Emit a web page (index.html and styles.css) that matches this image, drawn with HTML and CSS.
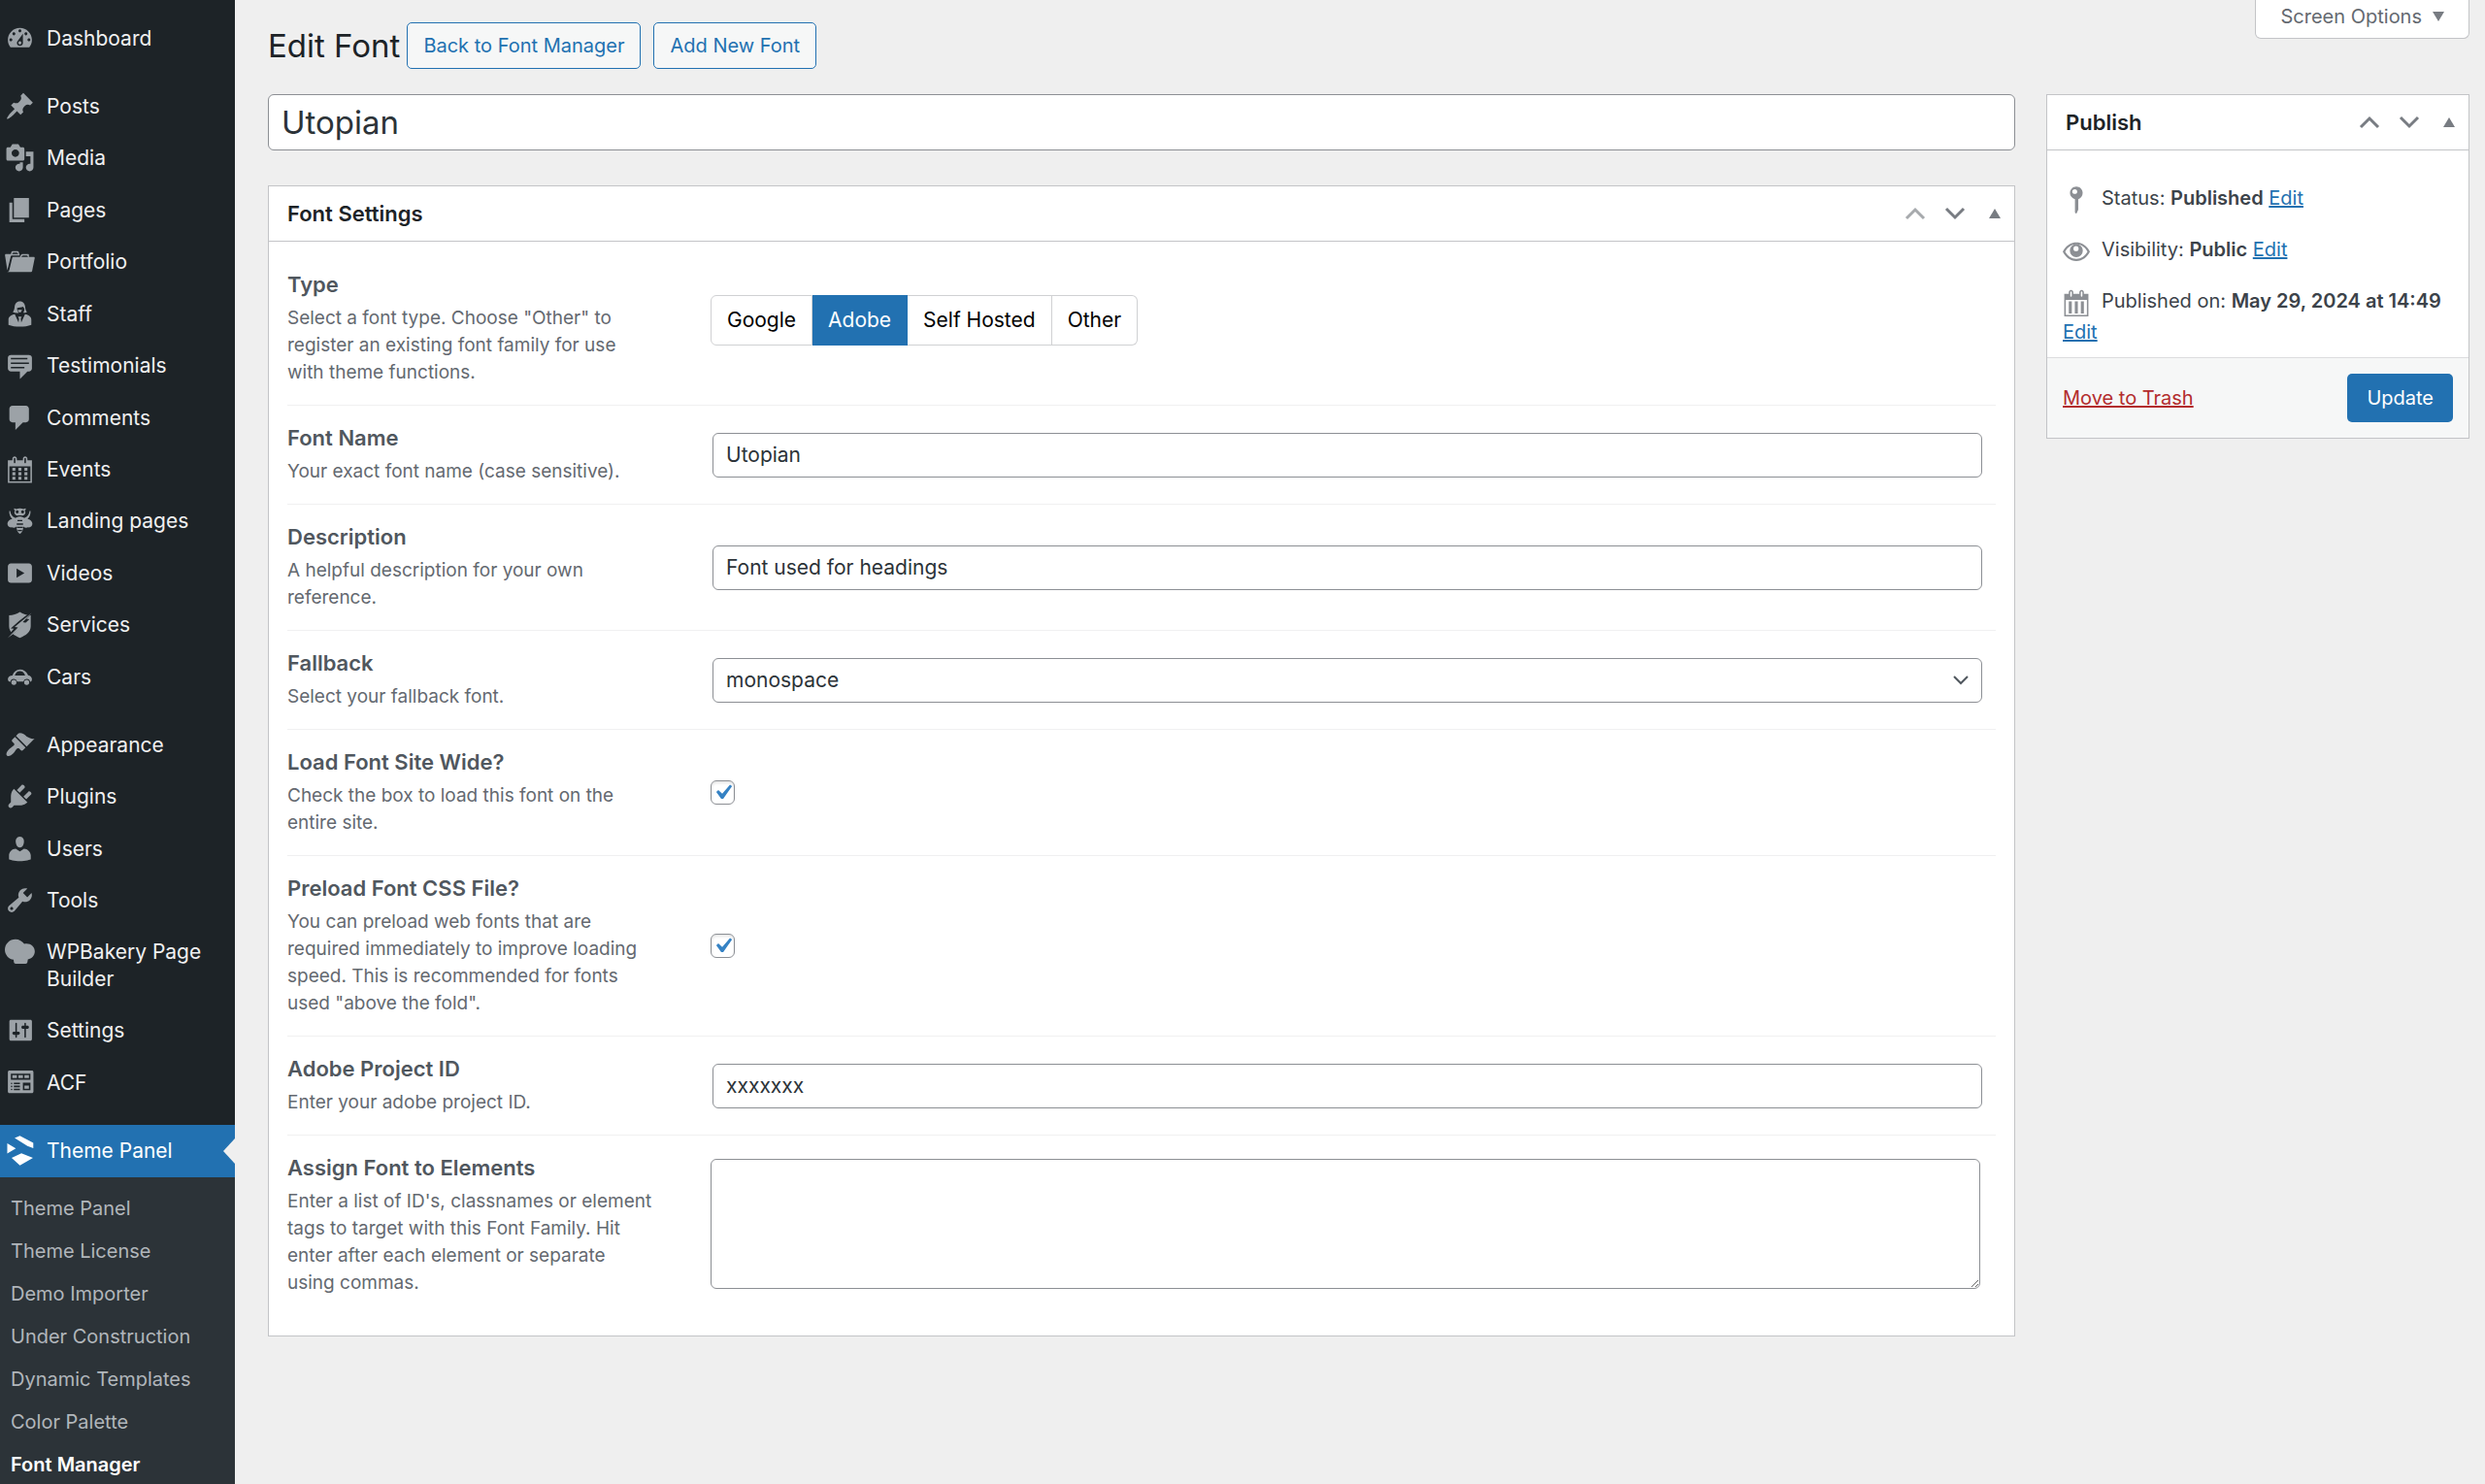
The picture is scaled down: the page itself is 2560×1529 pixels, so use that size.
FILE: index.html
```html
<!DOCTYPE html>
<html lang="en">
<head>
    <meta charset="UTF-8">
    <meta name="viewport" content="width=device-width, initial-scale=1.0">
    <title>Edit Font</title>
    <link rel="stylesheet" href="styles.css">
</head>
<body>

    <nav class="sidebar">
        <ul class="menu">
            <li><a href="#"><svg class="icon" viewBox="0 0 20 20"><path d="M3.76 16h12.48c1.1-1.37 1.76-3.11 1.76-5 0-4.42-3.58-8-8-8s-8 3.58-8 8c0 1.89.66 3.63 1.76 5zM10 4c.55 0 1 .45 1 1s-.45 1-1 1-1-.45-1-1 .45-1 1-1zM6 6c.55 0 1 .45 1 1s-.45 1-1 1-1-.45-1-1 .45-1 1-1zm8 0c.55 0 1 .45 1 1s-.45 1-1 1-1-.45-1-1 .45-1 1-1zm-5.37 5.55L12 7v6c0 1.1-.9 2-2 2s-2-.9-2-2c0-.57.24-1.08.63-1.45zM4 10c.55 0 1 .45 1 1s-.45 1-1 1-1-.45-1-1 .45-1 1-1zm12 0c.55 0 1 .45 1 1s-.45 1-1 1-1-.45-1-1 .45-1 1-1zm-5 3c0-.55-.45-1-1-1s-1 .45-1 1 .45 1 1 1 1-.45 1-1z"/></svg>Dashboard</a></li>
        </ul>

        <ul class="menu menu-content">
            <li><a href="#"><svg class="icon" viewBox="0 0 20 20"><path d="M10.44 3.02l1.82-1.82 6.36 6.35-1.83 1.82c-1.05-.68-2.48-.57-3.41.36l-.75.75c-.92.93-1.04 2.35-.35 3.41l-1.83 1.82-2.41-2.41-2.8 2.79c-.42.42-3.38 2.71-3.8 2.29s1.86-3.39 2.28-3.81l2.79-2.79L4.1 9.36l1.83-1.82c1.05.69 2.48.57 3.4-.36l.75-.75c.93-.92 1.05-2.35.36-3.41z"/></svg>Posts</a></li>
            <li><a href="#"><svg class="icon" viewBox="0 0 20 20"><path d="M13 11V4c0-.55-.45-1-1-1h-1.67L9 1H5L3.67 3H2c-.55 0-1 .45-1 1v7c0 .55.45 1 1 1h10c.55 0 1-.45 1-1zM7 4.5c1.38 0 2.5 1.12 2.5 2.5S8.38 9.5 7 9.5 4.5 8.38 4.5 7 5.62 4.5 7 4.5zM14 6h5v10.5c0 1.38-1.12 2.5-2.5 2.5S14 17.88 14 16.5s1.12-2.5 2.5-2.5c.17 0 .34.02.5.05V9h-3V6zm-4 8.05V13h2v3.5c0 1.38-1.12 2.5-2.5 2.5S7 17.88 7 16.5 8.12 14 9.5 14c.17 0 .34.02.5.05z"/></svg>Media</a></li>
            <li><a href="#"><svg class="icon" viewBox="0 0 20 20"><path d="M6 15V2h10v13H6zm-1 1h8v2H3V5h2v11z"/></svg>Pages</a></li>
            <li><a href="#"><svg class="icon" viewBox="0 0 20 20"><path d="M4 5H.78c-.37 0-.74.32-.69.84l1.56 9.99S3.5 8.47 3.86 6.7c.11-.53.61-.7.98-.7H10s-.7-2.08-.77-2.31C9.11 3.25 8.89 3 8.45 3H5.14c-.36 0-.7.23-.8.64C4.25 4.04 4 5 4 5zm4.88 0h-4s.42-1 .87-1h2.13c.48 0 1 1 1 1zM2.67 16.25c-.31.47-.76.75-1.26.75h15.73c.54 0 .92-.31 1.03-.83.44-2.19 1.68-8.44 1.68-8.44.07-.5-.3-.73-.62-.73H16V5.53c0-.16-.26-.53-.66-.53h-3.76c-.52 0-.87.58-.87.58L10 7H5.59c-.32 0-.63.19-.69.5 0 0-1.59 6.7-1.72 7.33-.07.37-.22.99-.51 1.42zM15.38 7H11s.58-1 1.13-1h2.29c.71 0 .96 1 .96 1z"/></svg>Portfolio</a></li>
            <li><a href="#"><svg class="icon" viewBox="0 0 20 20"><path fill-rule="evenodd" d="M10 1.6c2.3 0 3.3 1.6 3.5 3.600.1 1.400.4 2.600 1.200 3.500-.9.500-1.800.6-2.600.5.500-.5.800-1.300.9-2.300-.1-.6-.4-1.200-1-1.700-1.200.5-2.700.4-3.900 1 0 1.200.4 2.300 1.200 3-.9.300-2.700.2-4-.5.8-.9 1.100-2.100 1.200-3.500C6.700 3.200 7.700 1.6 10 1.6zM8.700 7.1c.9.3 1.800.3 2.600 0-.1 1.100-.6 1.900-1.300 1.900s-1.200-.8-1.300-1.900zM6.600 10.200l2.500 5.400.3-2.600-.6-1.200h2.400l-.6 1.200.3 2.600 2.500-5.400c2.500.3 4.200 1.700 4.200 3.700v3.300c-2.200.8-4.700 1.200-7.600 1.200s-5.400-.4-7.600-1.200v-3.300c0-2 1.700-3.400 4.200-3.700z"/></svg>Staff</a></li>
            <li><a href="#"><svg class="icon" viewBox="0 0 20 20"><path d="M4 3h12c.55 0 1.020.2 1.410.59S18 4.450 18 5v7c0 .55-.2 1.020-.59 1.410S16.550 14 16 14h-1l-5 5v-5H4c-.55 0-1.020-.2-1.410-.59S2 12.550 2 12V5c0-.55.2-1.020.59-1.410S3.450 3 4 3zm11 2H4v1h11V5zm1 3H4v1h12V8zm-3 3H4v1h9v-1z"/></svg>Testimonials</a></li>
            <li><a href="#"><svg class="icon" viewBox="0 0 20 20"><path d="M5 2h9c1.100 0 2 .9 2 2v7c0 1.100-.9 2-2 2h-2l-5 5v-5H5c-1.100 0-2-.9-2-2V4c0-1.100.9-2 2-2z"/></svg>Comments</a></li>
            <li><a href="#"><svg class="icon" viewBox="0 0 20 20"><path d="M15 4h3v15H2V4h3V3c0-.41.15-.76.44-1.06.29-.29.65-.44 1.06-.44s.77.15 1.06.44c.29.3.44.65.44 1.06v1h4V3c0-.41.15-.76.44-1.06.29-.29.65-.44 1.06-.44s.77.15 1.06.44c.29.3.44.65.44 1.06v1zM6 3v2.500c0 .14.05.26.15.36.09.09.21.14.35.14s.26-.05.35-.14c.1-.1.15-.22.15-.36V3c0-.14-.05-.26-.15-.35-.09-.1-.21-.15-.35-.15s-.26.05-.35.15c-.1.09-.15.21-.15.35zm7 0v2.500c0 .14.05.26.14.36.1.09.22.14.36.14s.26-.05.36-.14c.09-.1.14-.22.14-.36V3c0-.14-.05-.26-.14-.35-.1-.1-.22-.15-.36-.15s-.26.05-.36.15c-.09.09-.14.21-.14.35zm4 15V8H3v10h14zM7 9v2H5V9h2zm2 0h2v2H9V9zm4 2V9h2v2h-2zm-6 1v2H5v-2h2zm2 0h2v2H9v-2zm4 2v-2h2v2h-2zm-6 1v2H5v-2h2zm4 2H9v-2h2v2zm4 0h-2v-2h2v2z"/></svg>Events</a></li>
            <li><a href="#"><svg class="icon" viewBox="0 0 20 20"><path d="M6.300 1.800l1.400.5c1.500-.6 3.100-.6 4.600 0l1.400-.5.3.8-.8.6c.5.7.6 1.500.3 2.200-.4 1-1.500 1.400-2.500 1H9c-1 .4-2.100 0-2.500-1-.3-.7-.2-1.500.3-2.200L6 2.600zM2.900 3.600l.7-.1c.2 2.100 1.100 3.800 3.500 4.700 1.800-1.300 4-1.300 5.800 0 2.400-.9 3.300-2.600 3.500-4.700l.7.1c0 2.300-.6 4-2 5.200 1.800.3 3.200 1.600 3.200 3.200 0 1.700-1.300 2.700-2.900 2.400-1.200.4-2.300.2-3.100-.6-.1 2.400-.9 4.200-2.300 4.900-1.400-.7-2.200-2.500-2.300-4.900-.8.8-1.900 1-3.100.6-1.600.3-2.900-.7-2.900-2.400 0-1.600 1.400-2.900 3.200-3.200-1.400-1.200-2-2.900-2-5.200z"/><path class="icon-gap" d="M8.200 3.100a1 1 0 100 2 1 1 0 000-2zm3.600 0a1 1 0 100 2 1 1 0 000-2zM8.400 9.500h3.200v.9H8.400zm-.5 2.300h4.200v.9H7.900zm.1 2.200h4v.9H8zm.6 2.100h2.800v.8H8.600z"/></svg>Landing pages</a></li>
            <li><a href="#"><svg class="icon" viewBox="0 0 20 20"><path d="M4 3.500h12c1.100 0 2 .9 2 2v9c0 1.100-.9 2-2 2H4c-1.100 0-2-.9-2-2v-9c0-1.100.9-2 2-2zM7.800 7v6l5.200-3z"/></svg>Videos</a></li>
            <li><a href="#"><svg class="icon" viewBox="0 0 20 20"><path d="M10 1.600c2.100 1.400 4.600 2.200 7.200 2.200v7.400c0 3.600-3.200 6.300-7.200 7.600-4-1.300-7.200-4-7.200-7.600V3.800c2.600 0 5.100-.8 7.200-2.200z"/><path class="icon-gap" d="M17.500 1.500L9.300 7.700l-5.400 4.800 2.100.3L1.500 18l.8.9 7.700-6.500 6.300-6-2-.2 4-3.800z"/><path d="M17.800 2.200l-7.500 6.200-3.800 3.200 2.200.4-6.800 6.800 8-5.800 4.300-4.200-2.300-.4z"/></svg>Services</a></li>
            <li><a href="#"><svg class="icon" viewBox="0 0 20 20"><path fill-rule="evenodd" d="M5 9c1-2.500 2.700-4 5-4s4.300 1.200 5.500 3.800c1.600.3 2.500 1.300 2.500 2.700 0 1-.4 1.700-1.200 1.800a2.300 2.300 0 00-4.500-.3H8.200a2.300 2.300 0 00-4.500.3C2.500 13.200 2 12.500 2 11.500 2 10 3.300 9 5 9zm1.600 0H13.500C12.800 7.200 11.700 6.200 10 6.200S7.300 7.200 6.600 9zM6 11.900a1.700 1.700 0 110 3.400 1.700 1.700 0 010-3.400zm8.500 0a1.700 1.700 0 110 3.400 1.700 1.700 0 010-3.400z"/></svg>Cars</a></li>
        </ul>

        <ul class="menu menu-admin">
            <li><a href="#"><svg class="icon" viewBox="0 0 20 20"><path d="M14.480 11.060L7.410 3.990l1.500-1.500c.5-.56 2.300-.47 3.510.32 1.210.8 1.430 1.280 2.910 2.100 1.180.64 2.450 1.260 4.450.85zm-.71.71L6.700 4.700 4.930 6.470c-.39.39-.39 1.020 0 1.410l1.060 1.060c.39.39.39 1.030 0 1.420-.6.6-1.430 1.110-2.210 1.690-.35.26-.7.53-1.010.84C1.430 14.230.4 16.080 1.400 17.070c.99 1 2.840-.03 4.180-1.360.31-.31.58-.66.85-1.020.57-.78 1.080-1.610 1.690-2.210.39-.39 1.020-.39 1.410 0l1.060 1.060c.39.39 1.020.39 1.410 0z"/></svg>Appearance</a></li>
            <li><a href="#"><svg class="icon" viewBox="0 0 20 20"><path d="M13.110 4.360L9.870 7.600 8 5.730l3.240-3.240c.35-.34 1.050-.2 1.560.32.52.51.66 1.210.31 1.550zm-8 1.770l.91-1.120 9.010 9.010-1.190.84c-.71.71-2.630 1.160-3.820 1.160H6.140L4.900 17.260c-.59.59-1.540.59-2.120 0-.59-.58-.59-1.530 0-2.120l1.240-1.240v-3.880c0-1.130.4-3.190 1.090-3.890zm7.260 3.970l3.240-3.240c.34-.35 1.040-.21 1.550.31.52.51.66 1.210.31 1.550l-3.240 3.250z"/></svg>Plugins</a></li>
            <li><a href="#"><svg class="icon" viewBox="0 0 20 20"><path d="M10 9.250c-2.270 0-2.730-3.440-2.730-3.440C7 4.020 7.820 2 9.970 2c2.160 0 2.980 2.020 2.710 3.810 0 0-.41 3.440-2.680 3.440zm0 2.570L12.720 10c2.390 0 4.520 2.330 4.520 4.530v2.490s-3.650 1.130-7.240 1.130c-3.650 0-7.240-1.130-7.240-1.130v-2.490c0-2.250 1.940-4.480 4.470-4.480z"/></svg>Users</a></li>
            <li><a href="#"><svg class="icon" viewBox="0 0 20 20"><path d="M16.680 9.770c-1.340 1.340-3.300 1.670-4.950.99l-5.410 6.520c-.99.99-2.590.99-3.580 0s-.99-2.590 0-3.570l6.520-5.420c-.68-1.650-.35-3.610.99-4.950 1.280-1.280 3.120-1.620 4.720-1.060l-2.890 2.890 2.820 2.820 2.860-2.870c.53 1.580.18 3.390-1.080 4.650zM3.810 16.210c.4.39 1.040.39 1.430 0 .4-.4.4-1.040 0-1.430-.39-.4-1.030-.4-1.430 0-.39.39-.39 1.030 0 1.430z"/></svg>Tools</a></li>
            <li><a href="#"><svg class="icon" viewBox="0 0 20 20"><path d="M7 1.700c2.500 0 4.700 1.300 5.900 3.200 3.700-.9 7 1.600 7 5 0 2.700-2 4.900-4.600 5.200l-.3 1.900c-.1.700-.5 1-1.200 1H7.200c-.7 0-1.100-.3-1.200-1l-.2-1.600C2.500 15 0 12 0 8.700c0-3.900 3.100-7 7-7z"/></svg>WPBakery Page Builder</a></li>
            <li><a href="#"><svg class="icon" viewBox="0 0 20 20"><path d="M18 16V4c0-.55-.45-1-1-1H4c-.55 0-1 .45-1 1v12c0 .55.45 1 1 1h13c.55 0 1-.45 1-1zM8 11h1c.55 0 1 .45 1 1s-.45 1-1 1H8v1.500c0 .28-.22.5-.5.5s-.5-.22-.5-.5V13H6c-.55 0-1-.45-1-1s.45-1 1-1h1V5.500c0-.28.22-.5.5-.5s.5.22.5.5V11zm5-2h-1c-.55 0-1-.45-1-1s.45-1 1-1h1V5.500c0-.28.22-.5.5-.5s.5.22.5.5V7h1c.55 0 1 .45 1 1s-.45 1-1 1h-1v5.500c0 .28-.22.5-.5.5s-.5-.22-.5-.5V9z"/></svg>Settings</a></li>
            <li><a href="#"><svg class="icon" viewBox="0 0 20 20"><path d="M19 16V3c0-.55-.45-1-1-1H3c-.55 0-1 .45-1 1v13c0 .55.45 1 1 1h15c.55 0 1-.45 1-1zM4 4h13v4H4V4zm1 1v2h3V5H5zm4 0v2h3V5H9zm4 0v2h3V5h-3zm-8.500 5c.28 0 .5.22.5.5s-.22.5-.5.5-.5-.22-.5-.5.22-.5.5-.5zM6 10h4v1H6v-1zm6 0h5v5h-5v-5zm-7.500 2c.28 0 .5.22.5.5s-.22.5-.5.5-.5-.22-.5-.5.22-.5.5-.5zM6 12h4v1H6v-1zm7 0v2h3v-2h-3zm-8.500 2c.28 0 .5.22.5.5s-.22.5-.5.5-.5-.22-.5-.5.22-.5.5-.5zM6 14h4v1H6v-1z"/></svg>ACF</a></li>
        </ul>

        <ul class="menu">
            <li class="current">
                <a href="#"><svg class="icon" viewBox="0 0 20 20"><path d="M6.500 1.600L10 .2l8.900 4.700v3.500L15 7zM1.600 5.200l5.700 3.400-5.700 3.400zM4.500 14.900l6.500-3.200 7.700 3.200-8.700 4.900z"/></svg>Theme Panel</a>
            </li>
        </ul>

        <ul class="submenu">
            <li><a href="#">Theme Panel</a></li>
            <li><a href="#">Theme License</a></li>
            <li><a href="#">Demo Importer</a></li>
            <li><a href="#">Under Construction</a></li>
            <li><a href="#">Dynamic Templates</a></li>
            <li><a href="#">Color Palette</a></li>
            <li><a href="#" class="active">Font Manager</a></li>
        </ul>
    </nav>

    <main class="content">
        <header class="page-header">
            <h1>Edit Font</h1>
            <a href="#" class="page-action">Back to Font Manager</a>
            <a href="#" class="page-action">Add New Font</a>
            <button type="button" class="screen-options">Screen Options <svg class="triangle" viewBox="0 0 12 10"><path d="M0 0h12L6 10z"/></svg></button>
        </header>

        <form class="columns">
            <div class="main-column">
                <input type="text" class="title-input" aria-label="Title" value="Utopian">

                <section class="panel">
                    <div class="panel-header">
                        <h2>Font Settings</h2>
                        <button type="button" aria-label="Move up" disabled><svg class="chevron" viewBox="0 0 22 14"><path d="M2 12l9-9 9 9"/></svg></button>
                        <button type="button" aria-label="Move down"><svg class="chevron" viewBox="0 0 22 14"><path d="M2 2l9 9 9-9"/></svg></button>
                        <button type="button" aria-label="Toggle panel"><svg class="triangle" viewBox="0 0 12 10"><path d="M6 0l6 10H0z"/></svg></button>
                    </div>

                    <div class="settings">
                        <div class="row">
                            <div>
                                <h3>Type</h3>
                                <p>Select a font type. Choose "Other" to register an existing font family for use with theme functions.</p>
                            </div>
                            <div class="button-group">
                                <button type="button">Google</button>
                                <button type="button" class="selected">Adobe</button>
                                <button type="button">Self Hosted</button>
                                <button type="button">Other</button>
                            </div>
                        </div>

                        <div class="row">
                            <div>
                                <label for="font-name">Font Name</label>
                                <p>Your exact font name (case sensitive).</p>
                            </div>
                            <input type="text" id="font-name" class="field" value="Utopian">
                        </div>

                        <div class="row">
                            <div>
                                <label for="description">Description</label>
                                <p>A helpful description for your own reference.</p>
                            </div>
                            <input type="text" id="description" class="field" value="Font used for headings">
                        </div>

                        <div class="row">
                            <div>
                                <label for="fallback">Fallback</label>
                                <p>Select your fallback font.</p>
                            </div>
                            <div class="select">
                                <select id="fallback" class="field">
                                    <option>monospace</option>
                                    <option>sans-serif</option>
                                    <option>serif</option>
                                </select>
                                <svg viewBox="0 0 16 10"><path d="M1 1l7 7 7-7"/></svg>
                            </div>
                        </div>

                        <div class="row">
                            <div>
                                <label for="load-site-wide">Load Font Site Wide?</label>
                                <p>Check the box to load this font on the entire site.</p>
                            </div>
                            <div class="checkbox">
                                <input type="checkbox" id="load-site-wide" checked>
                                <svg viewBox="2 2 16 16"><path d="M14.830 4.890l1.340.94-5.810 8.380H9.020L5.780 9.670l1.340-1.250 2.570 2.400z"/></svg>
                            </div>
                        </div>

                        <div class="row">
                            <div>
                                <label for="preload">Preload Font CSS File?</label>
                                <p>You can preload web fonts that are required immediately to improve loading speed. This is recommended for fonts used "above the fold".</p>
                            </div>
                            <div class="checkbox">
                                <input type="checkbox" id="preload" checked>
                                <svg viewBox="2 2 16 16"><path d="M14.830 4.890l1.340.94-5.810 8.380H9.020L5.780 9.670l1.340-1.250 2.570 2.400z"/></svg>
                            </div>
                        </div>

                        <div class="row">
                            <div>
                                <label for="project-id">Adobe Project ID</label>
                                <p>Enter your adobe project ID.</p>
                            </div>
                            <input type="text" id="project-id" class="field" value="xxxxxxx">
                        </div>

                        <div class="row">
                            <div>
                                <label for="elements">Assign Font to Elements</label>
                                <p>Enter a list of ID's, classnames or element tags to target with this Font Family. Hit enter after each element or separate using commas.</p>
                            </div>
                            <textarea id="elements"></textarea>
                        </div>
                    </div>
                </section>
            </div>

            <section class="panel">
                <div class="panel-header">
                    <h2>Publish</h2>
                    <button type="button" aria-label="Move up"><svg class="chevron" viewBox="0 0 22 14"><path d="M2 12l9-9 9 9"/></svg></button>
                    <button type="button" aria-label="Move down"><svg class="chevron" viewBox="0 0 22 14"><path d="M2 2l9 9 9-9"/></svg></button>
                    <button type="button" aria-label="Toggle panel"><svg class="triangle" viewBox="0 0 12 10"><path d="M6 0l6 10H0z"/></svg></button>
                </div>

                <div class="publish-info">
                    <p><svg class="info-icon" viewBox="1 1 18 18"><path fill-rule="evenodd" d="M10 1.200c2.400 0 4.200 1.900 4.200 4.200 0 2-1.200 3.600-2.900 4.100v6.900L10 19.200l-.9-.8V9.500C7.300 9 5.800 7.400 5.800 5.400c0-2.300 1.800-4.200 4.200-4.200zM9 2.900c-1 0-1.700.7-1.700 1.600S8 6 9 6s1.600-.6 1.600-1.500S10 2.900 9 2.900z"/></svg>Status: <strong>Published</strong> <a href="#">Edit</a></p>
                    <p><svg class="info-icon" viewBox="1 1 18 18"><path fill-rule="evenodd" d="M10 4c4.100 0 7.300 2.600 9 6.200-1.700 3.600-4.900 6.200-9 6.200s-7.300-2.600-9-6.200C2.700 6.600 5.900 4 10 4zm0 1.400C6.900 5.400 4.100 7.300 2.600 10.200 4.100 13.100 6.900 15 10 15s5.900-1.900 7.400-4.800C15.900 7.300 13.100 5.400 10 5.400z"/><path fill-rule="evenodd" d="M10 5.200a4.300 4.300 0 110 8.600 4.300 4.300 0 010-8.600zM9.800 6.500a1.700 1.700 0 100 3.400 1.700 1.700 0 000-3.400z"/></svg>Visibility: <strong>Public</strong> <a href="#">Edit</a></p>
                    <p><svg class="info-icon" viewBox="1 1 18 18"><path d="M15 4h3v15H2V4h3V3c0-.41.15-.76.44-1.060.29-.29.65-.44 1.060-.44s.77.15 1.060.44c.29.3.44.65.44 1.060v1h4V3c0-.41.15-.76.44-1.060.29-.29.65-.44 1.060-.44s.77.15 1.060.44c.29.3.44.65.44 1.060v1zM6 3v2.500c0 .28.22.5.5.5s.5-.22.5-.5V3c0-.28-.22-.5-.5-.5S6 2.720 6 3zm7 0v2.500c0 .28.22.5.5.5s.5-.22.5-.5V3c0-.28-.22-.5-.5-.5s-.5.220-.5.5zm4 15V8H3v10h14zM7 9v8H5V9h2zm4 0v8H9V9h2zm4 0v8h-2V9h2z"/></svg>Published on: <strong>May 29, 2024 at 14:49</strong> <a href="#">Edit</a></p>
                </div>

                <div class="publish-actions">
                    <a href="#" class="trash">Move to Trash</a>
                    <button type="submit" class="update">Update</button>
                </div>
            </section>
        </form>
    </main>

</body>
</html>
```
FILE: styles.css
```css
* {
    box-sizing: border-box;
}

body {
    display: flex;
    min-height: 100vh;
    margin: 0;
    background: #efefef;
    color: #3c434a;
    font-family: Inter, "Liberation Sans", sans-serif;
    font-size: 20px;
    line-height: 28px;
}

h1, h2, h3, p, ul {
    margin: 0;
    padding: 0;
}

button, input, select, textarea {
    margin: 0;
    font-family: inherit;
    font-size: inherit;
}

button {
    cursor: pointer;
}

/* Sidebar */

.sidebar {
    display: flex;
    flex-direction: column;
    flex: none;
    width: 242px;
    padding-top: 13px;
    background: #1d2327;
}

.sidebar ul {
    list-style: none;
}

.sidebar a {
    text-decoration: none;
}

.menu {
    display: flex;
    flex-direction: column;
    margin-bottom: 17px;
    font-size: 21px;
}

.menu:nth-last-child(2) {
    margin-bottom: 0;
}

/* the items share out the height of their group */
.menu li {
    display: flex;
    flex: 1 0 auto;
}

.menu-content {
    min-height: 641px;
}

.menu-admin {
    min-height: 401px;
}

.menu a {
    display: flex;
    flex: 1;
    gap: 12px;
    padding: 13px 12px 12px 5px;
    color: #f0f0f1;
}

.icon {
    flex: none;
    width: 31px;
    height: 31px;
    margin: -2px 0 -1px;
    fill: #9ca2a7;
}

.icon-gap {
    fill: #1d2327;
}

.current {
    position: relative;
    background: #2271b1;
}

.menu .current a {
    padding-bottom: 13px;
    color: #fff;
}

.current .icon {
    fill: #fff;
}

.current::after {
    content: "";
    position: absolute;
    top: 14px;
    right: 0;
    border: 13px solid transparent;
    border-left: 0;
    border-right: 12px solid #efefef;
}

.submenu {
    flex: 1;
    padding-top: 10px;
    background: #2c3338;
}

.submenu a {
    display: block;
    padding: 8px 11px;
    color: #b1b6bb;
}

.submenu .active {
    color: #fff;
    font-weight: 600;
}

/* Page header */

.content {
    flex: 1;
    min-width: 0;
    padding: 0 16px 0 34px;
}

.page-header {
    display: flex;
    align-items: flex-start;
    gap: 13px;
    height: 97px;
}

h1 {
    margin-right: -6px;
    padding-top: 24px;
    color: #1d2327;
    font-size: 33px;
    font-weight: 400;
    line-height: 46px;
}

.page-action {
    margin-top: 23px;
    padding: 9px 16px;
    border: 1px solid #2271b1;
    border-radius: 5px;
    background: #f6f7f7;
    color: #2271b1;
    text-decoration: none;
}

.screen-options {
    display: flex;
    align-items: center;
    gap: 11px;
    height: 40px;
    margin-left: auto;
    padding: 0 25px 5px;
    border: 1px solid #c3c4c7;
    border-top: 0;
    border-radius: 0 0 6px 6px;
    background: #fff;
    color: #646970;
}

.triangle {
    width: 12px;
    height: 10px;
    fill: #787c82;
}

/* Panels */

.columns {
    display: grid;
    grid-template-columns: 1fr 436px;
    align-items: start;
    gap: 32px;
}

.title-input {
    width: 100%;
    height: 58px;
    margin-bottom: 36px;
    padding: 0 13px;
    border: 1px solid #8c8f94;
    border-radius: 6px;
    background: #fff;
    color: #2c3338;
    font-size: 33px;
}

.main-column {
    display: flex;
    flex-direction: column;
}

.panel {
    border: 1px solid #c3c4c7;
    background: #fff;
}

.panel-header {
    display: flex;
    align-items: center;
    height: 57px;
    border-bottom: 1px solid #c3c4c7;
}

.panel-header h2 {
    flex: 1;
    padding-left: 19px;
    color: #1d2327;
    font-size: 22px;
    font-weight: 600;
}

.panel-header button {
    display: flex;
    justify-content: center;
    width: 41px;
    padding: 0;
    border: 0;
    background: none;
}

.chevron {
    width: 22px;
    height: 14px;
    fill: none;
    stroke: #787c82;
    stroke-width: 3;
}

button:disabled .chevron {
    stroke: #a7aaad;
}

/* Font settings */

.settings {
    padding: 11px 19px 21px;
}

.row {
    display: grid;
    grid-template-columns: 378px 1fr;
    align-items: center;
    gap: 58px;
    padding: 19px 14px 19px 0;
    border-bottom: 1px solid #f0f0f1;
}

.row:last-child {
    border-bottom: 0;
}

.row h3,
.row label {
    display: block;
    margin-bottom: 7px;
    color: #50575e;
    font-size: 22px;
    font-weight: 600;
    line-height: 28px;
}

.row p {
    color: #646970;
    font-size: 19px;
}

.field {
    width: 100%;
    height: 46px;
    padding: 0 13px;
    border: 1px solid #8c8f94;
    border-radius: 6px;
    background: #fff;
    color: #2c3338;
    font-size: 21px;
}

input.field,
.select {
    width: auto;
    margin: -9px 0 -9px 2px;
}

.select {
    display: grid;
    align-items: center;
}

.select .field {
    grid-area: 1 / 1;
    appearance: none;
}

.select svg {
    grid-area: 1 / 1;
    justify-self: end;
    width: 16px;
    height: 10px;
    margin-right: 14px;
    fill: none;
    stroke: #50575e;
    stroke-width: 2;
    pointer-events: none;
}

.button-group {
    display: flex;
    margin-bottom: 18px;
}

.button-group button {
    height: 52px;
    padding: 0 16px;
    border: 1px solid #d0d1d3;
    border-left-width: 0;
    background: #fff;
    color: #000;
    font-size: 21px;
}

.button-group button:first-child {
    border-left-width: 1px;
    border-radius: 6px 0 0 6px;
}

.button-group button:last-child {
    border-radius: 0 6px 6px 0;
}

.button-group .selected {
    border-color: #2271b1;
    background: #2271b1;
    color: #fff;
}

.checkbox {
    display: grid;
    width: 25px;
    height: 25px;
}

.checkbox input {
    grid-area: 1 / 1;
    appearance: none;
    border: 1px solid #8c8f94;
    border-radius: 6px;
    background: #fff;
    box-shadow: inset 0 2px 3px rgba(0, 0, 0, 0.1);
}

.checkbox svg {
    grid-area: 1 / 1;
    fill: #3582c4;
    pointer-events: none;
}

textarea {
    height: 134px;
    margin: 0 2px 4px 0;
    padding: 8px 12px;
    border: 1px solid #8c8f94;
    border-radius: 6px;
    background: #fff;
    resize: vertical;
}

/* Publish box */

.publish-info {
    padding: 22px 16px 0;
    line-height: 32px;
}

.publish-info p {
    padding: 11px 0 10px;
}

.publish-info strong {
    font-weight: 600;
}

.publish-info a {
    color: #2271b1;
}

.info-icon {
    width: 28px;
    height: 28px;
    margin-right: 12px;
    fill: #8c8f94;
    vertical-align: middle;
}

.publish-actions {
    display: flex;
    align-items: center;
    justify-content: space-between;
    padding: 16px;
    border-top: 1px solid #dcdcde;
    background: #f6f7f7;
}

.trash {
    color: #b32d2e;
}

.update {
    height: 50px;
    padding: 0 20px;
    border: 0;
    border-radius: 5px;
    background: #2271b1;
    color: #fff;
}
```
